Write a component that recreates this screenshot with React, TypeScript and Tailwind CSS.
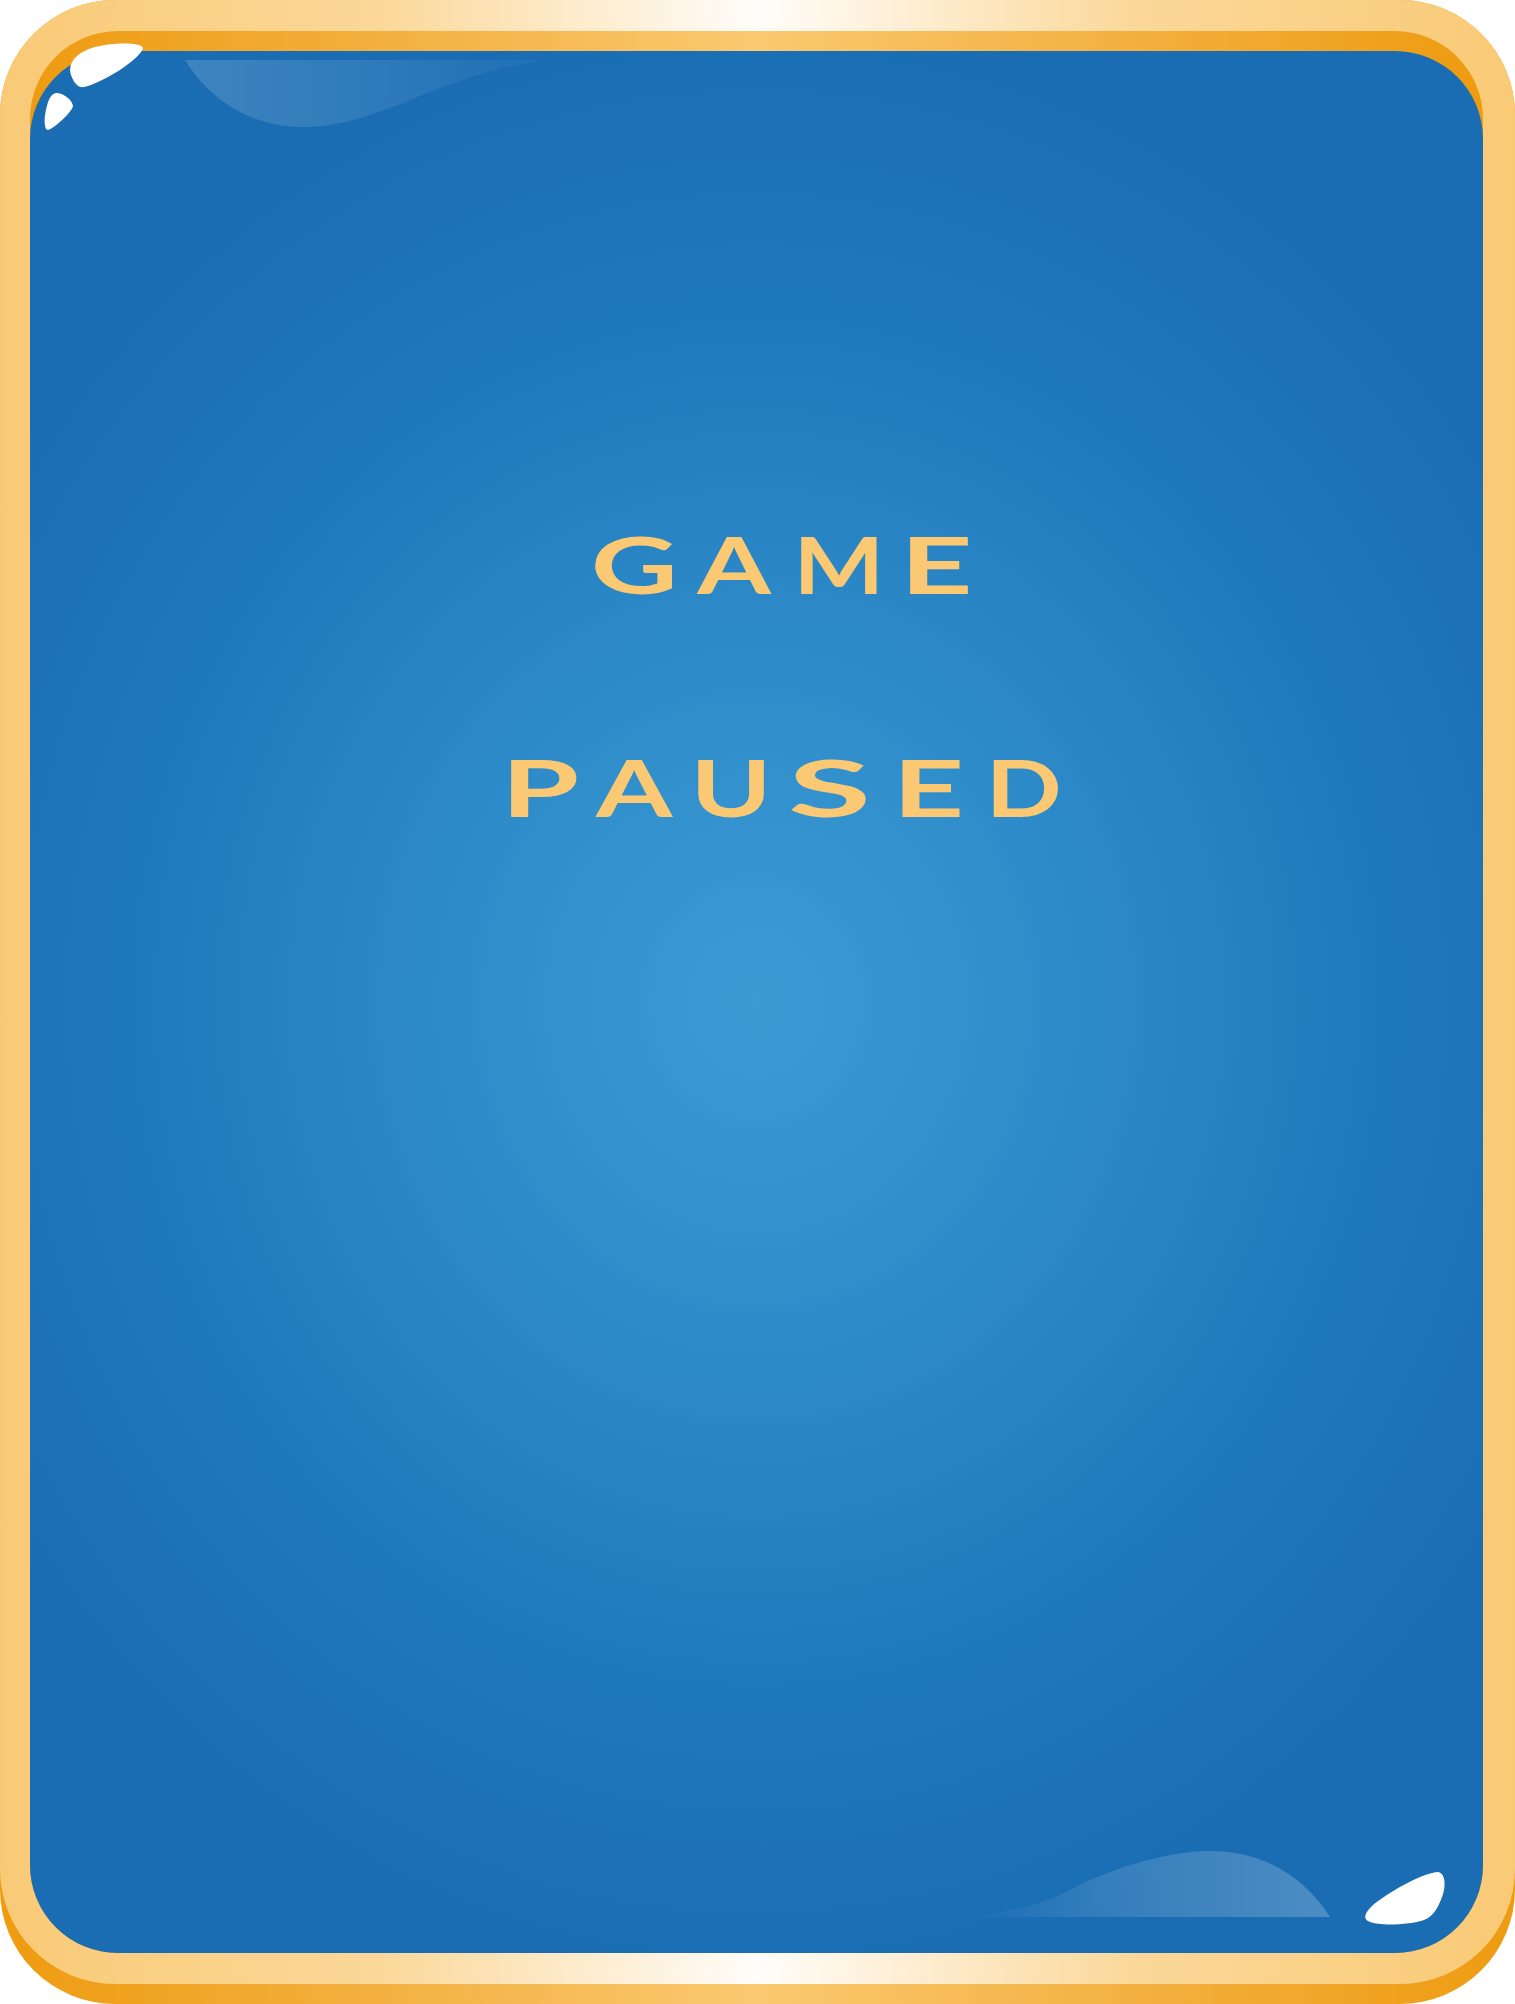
import React from 'react';

type Letter = { ch: string; cell: string; sx: string };

const game: Letter[] = [
  { ch: 'G', cell: 'w-[99px]', sx: 'scale-x-[1.54]' },
  { ch: 'A', cell: 'w-[100px]', sx: 'scale-x-[1.36]' },
  { ch: 'M', cell: 'w-[109px]', sx: 'scale-x-[1.23]' },
  { ch: 'E', cell: 'w-[94px] pr-[8px]', sx: 'scale-x-[1.62]' },
];

const paused: Letter[] = [
  { ch: 'P', cell: 'w-[94px]', sx: 'scale-x-[1.62]' },
  { ch: 'A', cell: 'w-[94px]', sx: 'scale-x-[1.41]' },
  { ch: 'U', cell: 'w-[99px]', sx: 'scale-x-[1.4]' },
  { ch: 'S', cell: 'w-[99px]', sx: 'scale-x-[1.95]' },
  { ch: 'E', cell: 'w-[99px]', sx: 'scale-x-[1.6]' },
  { ch: 'D', cell: 'w-[91px]', sx: 'scale-x-[1.28]' },
];

const Highlights = () => (
  <svg className="pointer-events-none absolute left-0 top-0" width="1515" height="2004" viewBox="0 0 1515 2004">
    <defs>
      <linearGradient id="glossTop" x1="0" y1="0" x2="1" y2="0">
        <stop offset="0" stopColor="#ffffff" stopOpacity="0.16" />
        <stop offset="0.6" stopColor="#ffffff" stopOpacity="0.08" />
        <stop offset="1" stopColor="#ffffff" stopOpacity="0.02" />
      </linearGradient>
      <linearGradient id="glossBottom" x1="0" y1="0" x2="1" y2="0">
        <stop offset="0" stopColor="#ffffff" stopOpacity="0" />
        <stop offset="0.4" stopColor="#ffffff" stopOpacity="0.12" />
        <stop offset="1" stopColor="#ffffff" stopOpacity="0.22" />
      </linearGradient>
    </defs>

    {/* top gloss */}
    <path d="M185 60 L550 60 C505 64 465 78 425 94 C385 110 345 127 305 127 C250 127 210 100 185 60 Z" fill="url(#glossTop)" />
    {/* bottom gloss */}
    <path d="M965 1917 C1000 1914 1040 1906 1070 1890 C1110 1868 1170 1851 1210 1851 C1265 1851 1305 1878 1330 1917 Z" fill="url(#glossBottom)" />

    {/* white sparkles */}
    <path d="M143 48 C141 42 112 43 100 46 C78 50 67 62 71 75 C74 84 79 88 84 87 C100 84 140 60 143 48 Z" fill="#ffffff" />
    <path d="M57 93 C65 94 72 100 73 106 C72 112 55 128 48 130 C44 130 44 118 46 110 C48 100 51 93 57 93 Z" fill="#ffffff" />
    <path d="M1438 1872 C1447 1874 1446 1890 1440 1902 C1436 1912 1430 1918 1424 1920 C1410 1925 1380 1926 1370 1922 C1362 1919 1365 1913 1372 1906 C1388 1892 1425 1872 1438 1872 Z" fill="#ffffff" />
  </svg>
);

const Word = ({ letters }: { letters: Letter[] }) => (
  <div className="flex justify-center text-[78px] font-bold leading-[78px] text-[#fbc974] [font-family:Lato,'Liberation_Sans',sans-serif]">
    {letters.map((l, i) => (
      <div key={i} className={`flex justify-center ${l.cell}`}>
        <span className={`inline-block origin-center ${l.sx}`}>{l.ch}</span>
      </div>
    ))}
  </div>
);

export default function App() {
  return (
    <div className="relative h-[2004px] w-[1515px] overflow-hidden bg-white">
      {/* outer orange rim peeking below */}
      <div className="h-full w-full rounded-[115px] bg-[linear-gradient(90deg,#ee9b10_0%,#f4b54a_30%,#fbc970_50%,#f4b54a_70%,#ee9b10_100%)] pb-[20px]">
        {/* light frame */}
        <div className="h-full w-full rounded-[115px] bg-[linear-gradient(90deg,#f9ca76_0%,#fbd899_25%,#fffdfa_50%,#fbd899_75%,#f9ca76_100%)] pb-[31px] pl-[30px] pr-[32px] pt-[31px]">
          {/* inner orange lip */}
          <div className="h-full w-full rounded-[88px] bg-[linear-gradient(90deg,#ee9b10_0%,#f4b54a_30%,#fbc970_50%,#f4b54a_70%,#ee9b10_100%)] pt-[20px]">
            {/* blue panel */}
            <div className="flex h-full w-full flex-col rounded-[88px] bg-[radial-gradient(ellipse_62%_52%_at_50%_50%,#3b9cd4_0%,#2e8bc9_35%,#2078bc_70%,#1a6db3_100%)] pl-[59px] pt-[474px]">
              <Word letters={game} />
              <div className="mt-[145px] pr-[10px]">
                <Word letters={paused} />
              </div>
            </div>
          </div>
        </div>
      </div>
      <Highlights />
    </div>
  );
}
